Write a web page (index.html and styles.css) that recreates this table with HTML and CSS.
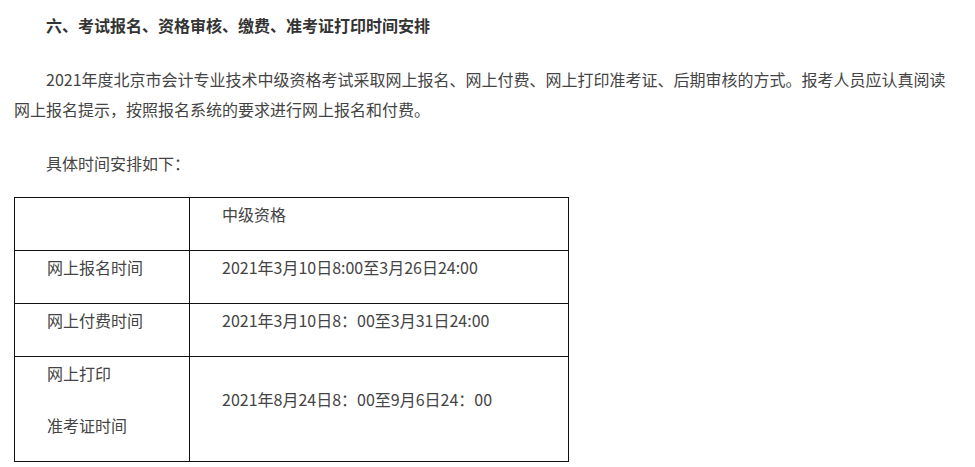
FILE: index.html
```html
<!DOCTYPE html>
<html>
<head>
    <meta charset="utf-8">
    <title>考试报名时间安排</title>
    <link rel="stylesheet" href="styles.css">
</head>
<body>
    <div class="article">
        <p class="section-title">六、考试报名、资格审核、缴费、准考证打印时间安排</p>
        <p class="indent">2021年度北京市会计专业技术中级资格考试采取网上报名、网上付费、网上打印准考证、后期审核的方式。报考人员应认真阅读网上报名提示，按照报名系统的要求进行网上报名和付费。</p>
        <p class="indent lead">具体时间安排如下：</p>

        <table class="schedule">
            <tr>
                <td class="label"><p>&nbsp;</p></td>
                <td><p>中级资格</p></td>
            </tr>
            <tr>
                <td class="label"><p>网上报名时间</p></td>
                <td><p>2021年3月10日8:00至3月26日24:00</p></td>
            </tr>
            <tr>
                <td class="label"><p>网上付费时间</p></td>
                <td><p>2021年3月10日8：00至3月31日24:00</p></td>
            </tr>
            <tr>
                <td class="label"><p>网上打印</p><p>准考证时间</p></td>
                <td><p>2021年8月24日8：00至9月6日24：00</p></td>
            </tr>
        </table>
    </div>
</body>
</html>
```

FILE: styles.css
```css
body {
    margin: 0;
    background-color: #fff;
    font-family: "Noto Sans CJK SC", "Microsoft YaHei", sans-serif;
    font-size: 16px;
    color: #444;
}
.article {
    padding: 10px 14px 0;
}
.article p {
    margin: 0 0 24px;
    line-height: 30px;
}
.section-title {
    font-weight: bold;
    color: #333;
    text-indent: 32px;
}
.indent {
    text-indent: 32px;
}
.article p.lead {
    margin-bottom: 19px;
}
.schedule {
    border-collapse: collapse;
    width: 555px;
}
.schedule td {
    border: 1px solid #111;
    padding: 0 32px;
    vertical-align: middle;
}
.schedule td.label {
    width: 110px;
}
.schedule td p {
    margin: 0 0 19px;
    line-height: 33px;
}
```
